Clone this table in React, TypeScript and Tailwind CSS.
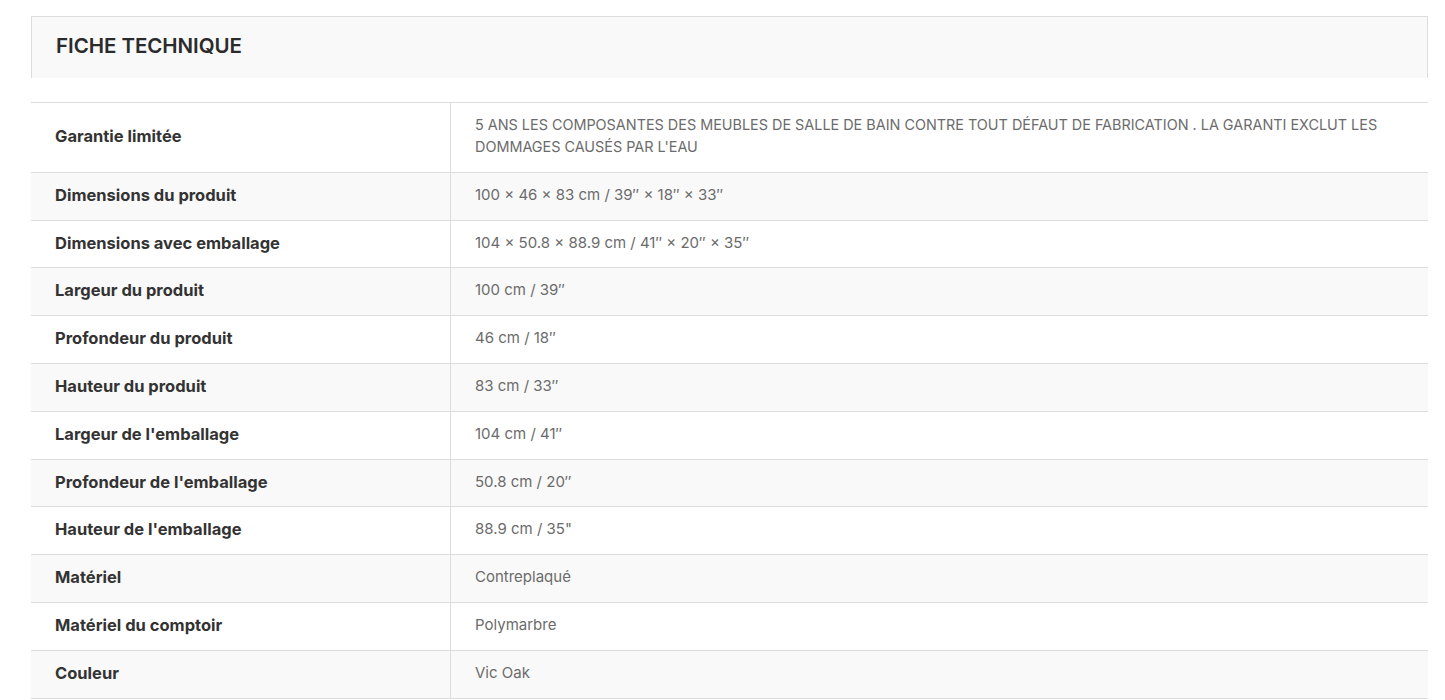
const SPECS: [string, string][] = [
  [
    "Garantie limitée",
    "5 ANS LES COMPOSANTES DES MEUBLES DE SALLE DE BAIN CONTRE TOUT DÉFAUT DE FABRICATION . LA GARANTI EXCLUT LES DOMMAGES CAUSÉS PAR L'EAU",
  ],
  ["Dimensions du produit", "100 × 46 × 83 cm / 39″ × 18″ × 33″"],
  ["Dimensions avec emballage", "104 × 50.8 × 88.9 cm / 41″ × 20″ × 35″"],
  ["Largeur du produit", "100 cm / 39″"],
  ["Profondeur du produit", "46 cm / 18″"],
  ["Hauteur du produit", "83 cm / 33″"],
  ["Largeur de l'emballage", "104 cm / 41″"],
  ["Profondeur de l'emballage", "50.8 cm / 20″"],
  ["Hauteur de l'emballage", "88.9 cm / 35\""],
  ["Matériel", "Contreplaqué"],
  ["Matériel du comptoir", "Polymarbre"],
  ["Couleur", "Vic Oak"],
];

export default function App() {
  return (
    <div className="min-h-[700px] bg-white pt-4 pl-[31px] pr-[17px] font-['Inter','Noto_Sans',sans-serif]">
      {/* Header */}
      <div className="h-[62px] flex items-center border-t border-x border-[#dddddd] bg-[#f9f9f9] px-6 pb-[3px]">
        <h2 className="text-[20.5px] font-semibold tracking-[-0.05px] text-[#2b2b2b]">
          FICHE TECHNIQUE
        </h2>
      </div>

      {/* Specs table */}
      <div className="mt-6 border-t border-[#dddddd]">
        {SPECS.map(([label, value], i) => (
          <div
            key={label}
            className={
              "flex border-b border-[#dddddd] " +
              (i % 2 === 1 ? "bg-[#f9f9f9]" : "bg-white")
            }
          >
            <div className="w-[420px] shrink-0 flex items-center border-r border-[#dddddd] px-6 pt-[11px] pb-[13.8px] text-[16.5px] leading-[22px] font-bold text-[#333333]">
              {label}
            </div>
            <div
              className={
                "flex-1 px-6 pt-[11px] pb-[13.8px] leading-[22px] text-[#6b6b6b] " +
                (i === 0 ? "text-[14.4px]" : "text-[15px]")
              }
            >
              {value}
            </div>
          </div>
        ))}
      </div>
    </div>
  );
}
